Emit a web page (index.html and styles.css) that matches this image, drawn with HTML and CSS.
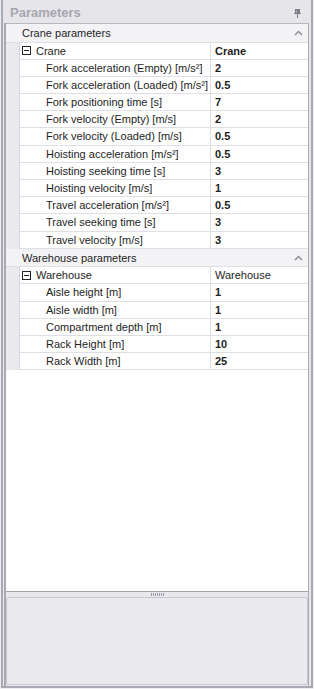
FILE: index.html
```html
<html>
<head>
    <title>Parameters</title>
    <link rel="stylesheet" href="styles.css">
</head>
<body>

<div class='dock'>
    <div class='caption'>
        <span class='title'>Parameters</span>
        <svg class='pin' width='7' height='9' viewBox='0 0 7 9'>
            <rect x='1' y='0' width='5' height='4' fill='#7b7b88'/>
            <rect x='2' y='1' width='1' height='3' fill='#a4a4b0'/>
            <rect x='0' y='4' width='7' height='1' fill='#7b7b88'/>
            <rect x='3' y='5' width='1' height='4' fill='#7b7b88'/>
        </svg>
    </div>

    <div class='body'>
        <div class='grid'>
            <div class='cat'>
                <span>Crane parameters</span>
                <svg class='chev' width='9' height='6' viewBox='0 0 9 6'><path d='M1 5l3.5-3.5L8 5' fill='none' stroke='#8a8a96' stroke-width='1.4'/></svg>
            </div>
            <div class='row parent'>
                <div class='gut'></div>
                <div class='name'><span class='box'></span>Crane</div>
                <div class='val'>Crane</div>
            </div>
            <div class='row'><div class='gut'></div><div class='name'>Fork acceleration (Empty) [m/s²]</div><div class='val'>2</div></div>
            <div class='row'><div class='gut'></div><div class='name'>Fork acceleration (Loaded) [m/s²]</div><div class='val'>0.5</div></div>
            <div class='row'><div class='gut'></div><div class='name'>Fork positioning time [s]</div><div class='val'>7</div></div>
            <div class='row'><div class='gut'></div><div class='name'>Fork velocity (Empty) [m/s]</div><div class='val'>2</div></div>
            <div class='row'><div class='gut'></div><div class='name'>Fork velocity (Loaded) [m/s]</div><div class='val'>0.5</div></div>
            <div class='row'><div class='gut'></div><div class='name'>Hoisting acceleration [m/s²]</div><div class='val'>0.5</div></div>
            <div class='row'><div class='gut'></div><div class='name'>Hoisting seeking time [s]</div><div class='val'>3</div></div>
            <div class='row'><div class='gut'></div><div class='name'>Hoisting velocity [m/s]</div><div class='val'>1</div></div>
            <div class='row'><div class='gut'></div><div class='name'>Travel acceleration [m/s²]</div><div class='val'>0.5</div></div>
            <div class='row'><div class='gut'></div><div class='name'>Travel seeking time [s]</div><div class='val'>3</div></div>
            <div class='row'><div class='gut'></div><div class='name'>Travel velocity [m/s]</div><div class='val'>3</div></div>

            <div class='cat'>
                <span>Warehouse parameters</span>
                <svg class='chev' width='9' height='6' viewBox='0 0 9 6'><path d='M1 5l3.5-3.5L8 5' fill='none' stroke='#8a8a96' stroke-width='1.4'/></svg>
            </div>
            <div class='row parent'>
                <div class='gut'></div>
                <div class='name'><span class='box'></span>Warehouse</div>
                <div class='val plain'>Warehouse</div>
            </div>
            <div class='row'><div class='gut'></div><div class='name'>Aisle height [m]</div><div class='val'>1</div></div>
            <div class='row'><div class='gut'></div><div class='name'>Aisle width [m]</div><div class='val'>1</div></div>
            <div class='row'><div class='gut'></div><div class='name'>Compartment depth [m]</div><div class='val'>1</div></div>
            <div class='row'><div class='gut'></div><div class='name'>Rack Height [m]</div><div class='val'>10</div></div>
            <div class='row'><div class='gut'></div><div class='name'>Rack Width [m]</div><div class='val'>25</div></div>
        </div>

        <div class='splitter'><span></span><span></span><span></span><span></span><span></span><span></span><span></span></div>

        <div class='desc'></div>
    </div>
</div>

</body>
</html>
```

FILE: styles.css
```css
html, body {
    margin: 0;
    padding: 0;
    background: #eeeef2;
}

body {
    font-family: "Liberation Sans", Arial, sans-serif;
    font-size: 11px;
    color: #1e1e1e;
}

.dock {
    width: 308px;
    height: 686px;
    margin: 0 1px;
    border: 2px solid #a9a9b3;
    border-top: 0;
    background: #e9e9ed;
    display: flex;
    flex-direction: column;
}

.caption {
    height: 23px;
    flex: none;
    display: flex;
    align-items: center;
    padding: 0 10px 0 7px;
    background: #e6e6ea;
}

.caption .title {
    flex: 1;
    font-size: 13px;
    font-weight: bold;
    color: #a6a6b0;
    padding-top: 1px;
}

.caption .pin {
    margin-top: 4px;
}

.body {
    flex: 1;
    display: flex;
    flex-direction: column;
    margin: 0 2px 0 1px;
    border-left: 2px solid #a9a9b3;
    border-right: 1px solid #a9a9b3;
}

.grid {
    height: 567px;
    flex: none;
    background: #fff;
    border-top: 1px solid #b8b8c2;
    border-bottom: 1px solid #a3a3ad;
}

.cat {
    height: 17.5px;
    display: flex;
    align-items: center;
    padding: 0 5px 0 16px;
    background: #f3f3f6;
    border-bottom: 1px solid #dedee4;
}

.cat span {
    flex: 1;
}

.row {
    display: flex;
    height: 17.2px;
    line-height: 16px;
}

.gut {
    width: 13px;
    background: #eaeaee;
    border-right: 1px solid #d5d5dc;
    flex: none;
}

.name {
    width: 164px;
    padding-left: 26px;
    border-right: 1px solid #dedee4;
    border-bottom: 1px solid #dedee4;
    white-space: nowrap;
    overflow: hidden;
    flex: none;
}

.val {
    flex: 1;
    padding-left: 4px;
    font-weight: bold;
    border-bottom: 1px solid #dedee4;
}

.val.plain {
    font-weight: normal;
}

.parent .name {
    padding-left: 2px;
    width: 188px;
    display: flex;
    align-items: center;
}

.box {
    width: 7px;
    height: 7px;
    border: 1px solid #222;
    margin-right: 5px;
    position: relative;
}

.box::after {
    content: '';
    position: absolute;
    left: 1px;
    top: 3px;
    width: 5px;
    height: 1px;
    background: #222;
}

.splitter {
    height: 5px;
    flex: none;
    display: flex;
    justify-content: center;
    align-items: center;
    gap: 1px;
}

.splitter span {
    width: 1px;
    height: 3px;
    background: #9a9aa6;
}

.desc {
    flex: 1;
    margin: 0 0 1px;
    border: 1px solid #c6c6ce;
    border-radius: 2px;
    background: #e9e9ee;
}
```
